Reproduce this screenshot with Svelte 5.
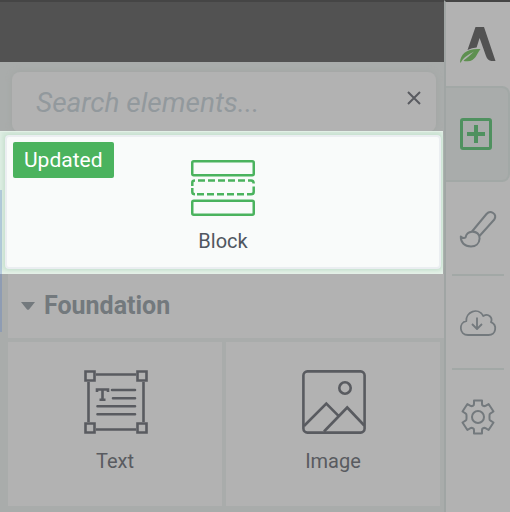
<script lang="ts">
	let query = '';
	let open = true;
	let activeTab = 'add';

	const tabs = [
		{ id: 'add', label: 'Add element' },
		{ id: 'style', label: 'Styles' },
		{ id: 'library', label: 'Cloud templates' },
		{ id: 'settings', label: 'Settings' }
	];

	const elements = [
		{ id: 'text', name: 'Text' },
		{ id: 'image', name: 'Image' }
	];
</script>

<div class="editor">
	<main class="panel">
		<div class="topbar"></div>

		<div class="search">
			<input type="text" placeholder="Search elements..." aria-label="Search elements" bind:value={query} />
			<button class="clear" type="button" aria-label="Clear search" on:click={() => (query = '')}>
				<svg width="14" height="14" viewBox="0 0 14 14">
					<path d="M1 1 13 13M13 1 1 13" fill="none" stroke="currentColor" stroke-width="2" />
				</svg>
			</button>
		</div>

		<div class="spotlight">
			<button class="block-card" type="button">
				<span class="badge">Updated</span>
				<svg width="64" height="58" viewBox="0 0 64 58" fill="none" stroke="currentColor" stroke-width="2.5">
					<rect x="1.25" y="2.25" width="61.5" height="14" rx="1.5" />
					<path d="M1.3 27V23.5Q1.3 21.5 4 21.5M7 21.5H14M17 21.5H24M27 21.5H34M37 21.5H44M47 21.5H54M57 21.5H60Q62.7 21.5 62.7 24.5M62.7 27.5V33Q62.7 35.3 60 35.3H56M53 35.3H46M43 35.3H36M33 35.3H26M23 35.3H16M13 35.3H6M4 35.3Q1.3 35.3 1.3 33V29" />
					<rect x="1.25" y="41.75" width="61.5" height="14" rx="1.5" />
				</svg>
				<span class="name">Block</span>
			</button>
		</div>

		<section class="group">
			<h2>
				<button class="group-title" type="button" aria-expanded={open} on:click={() => (open = !open)}>
					<svg width="14" height="8" viewBox="0 0 14 8">
						<path d="M0 0H14L8 7.4Q7 8 6 7.4Z" fill="currentColor" />
					</svg>
					Foundation
				</button>
			</h2>

			{#if open}
				<div class="tiles">
					{#each elements as element}
						<button class="tile" type="button">
							<svg width="64" height="64" viewBox="-1 0 64 64" fill="none" stroke="currentColor" stroke-width="2.6">
								{#if element.id === 'text'}
									<path d="M12 4.5H52M12 59.5H52M4.5 12V52M59.5 12V52" />
									<path d="M1.5 1.5H10.5V10.5H1.5ZM53.5 1.5H62.5V10.5H53.5ZM1.5 53.5H10.5V62.5H1.5ZM53.5 53.5H62.5V62.5H53.5Z" />
									<path d="M13 22V19.5H24V22M18.5 19V29.5M15.5 29.8H21.5" />
									<path d="M28 20H51M29 28.2H51M13.5 36.3H51M13.5 44.3H51" stroke-linecap="round" />
								{:else}
									<rect x="1.4" y="1.4" width="61.2" height="61.2" rx="4" />
									<circle cx="43" cy="18" r="5.7" />
									<path d="M2 56 24.3 33.5 37 46.3M22 61.5 45.2 37.5 62.3 55.5" />
								{/if}
							</svg>
							<span class="name">{element.name}</span>
						</button>
					{/each}
				</div>
			{/if}
		</section>
	</main>

	<aside class="sidebar">
		<a class="logo" href="#home" aria-label="Home">
			<svg width="36" height="37" viewBox="0 0 36 37">
				<path d="M15.5 1H24L35.5 35H31.5Q27.5 34.5 26 30L19.6 12 16.6 21.5Q12 21.8 7.5 24Z" fill="#525252" />
				<path d="M0 36.5C.3 28 7 22 20.5 23C16.5 28 15.7 35 7.5 35.3Q4.5 35.5 3.5 34.4C7 32 11 28.5 14 25.5C8.5 28.5 3.5 31.5.8 36.5Z" fill="#5e9050" />
			</svg>
		</a>

		<nav>
			{#each tabs as tab}
				<button
					class="tab"
					class:active={activeTab === tab.id}
					type="button"
					aria-label={tab.label}
					on:click={() => (activeTab = tab.id)}
				>
					{#if tab.id === 'add'}
						<svg width="32" height="32" viewBox="0 0 32 32" fill="none" stroke="currentColor">
							<rect x="1.5" y="1.5" width="29" height="29" rx="1.5" stroke-width="3" />
							<path d="M16 7V25M7 16H25" stroke-width="4" />
						</svg>
					{:else if tab.id === 'style'}
						<svg width="36" height="36" viewBox="0 0 36 36" fill="none" stroke="currentColor" stroke-width="2" stroke-linejoin="round">
							<path d="M12 20.5 26.5 3C30.5-1.5 37.5 3 34.3 8.5L19.5 25" />
							<path d="M12 20.8C16.5 20.5 19.8 23.5 19.6 27.5C19.3 33 15.5 35.5 11 35.5C4.5 35.5.7 31.5.8 25.5Q3.5 28 5.5 26.5C6.3 23 8.5 21 12 20.8ZM13.5 20.5Q18.5 21.5 19.5 25.5" />
						</svg>
					{:else if tab.id === 'library'}
						<svg width="36" height="26" viewBox="0 0 36 26" fill="none" stroke="currentColor" stroke-width="1.8" stroke-linejoin="round">
							<path d="M8 25C-1 25-1.5 12.5 6.3 11.2C5.5 2 18-3.5 23.3 6C28.5 3 33 7.5 31 12.2C37.5 15 36.3 25 28.5 25Z" />
							<path d="M17 7.5V18.5M12 14 17 19 22 14" />
						</svg>
					{:else}
						<svg width="36" height="36" viewBox="0 0 36 36" fill="none" stroke="currentColor" stroke-width="2" stroke-linejoin="round">
							<path d="M14 5V1.5H22V5Q22 6.3 23 6.7Q24.3 7.5 25.5 6.8L28.6 5 33.5 12.5 30.5 14.3Q29.3 15 29.5 16.5V19.5Q29.3 21 30.5 21.7L33.5 23.5 28.6 31 25.5 29.2Q24.3 28.5 23 29.3Q22 29.7 22 31V34.5H14V31Q14 29.7 13 29.3Q11.7 28.5 10.5 29.2L7.4 31 2.5 23.5 5.5 21.7Q6.7 21 6.5 19.5V16.5Q6.7 15 5.5 14.3L2.5 12.5 7.4 5 10.5 6.8Q11.7 7.5 13 6.7Q14 6.3 14 5Z" />
							<circle cx="18" cy="18" r="6" />
						</svg>
					{/if}
				</button>
			{/each}
		</nav>
	</aside>
</div>

<style>
	:global(body) {
		margin: 0;
		background: #b2b2b2;
	}

	.editor {
		display: flex;
		min-height: 100vh;
		overflow: hidden;
		font-family: Roboto, 'Liberation Sans', sans-serif;
		font-size: 20px;
		line-height: 24px;
		color: #595b60;
		background: #b2b2b2;
	}

	button {
		border: 0;
		padding: 0;
		margin: 0;
		background: none;
		font: inherit;
		color: inherit;
		cursor: pointer;
	}

	svg {
		display: block;
		overflow: visible;
	}

	.panel {
		position: relative;
		flex: 1;
		min-width: 0;
		background: #a9acab;
	}

	/* edge of the selected canvas item behind the panel */
	.panel::before {
		content: '';
		position: absolute;
		z-index: 1;
		top: 190px;
		left: 0;
		width: 2px;
		height: 142px;
		background: #5078c8;
		opacity: 0.3;
	}

	.topbar {
		box-sizing: border-box;
		height: 62px;
		border-top: 2px solid #454545;
		background: #525252;
	}

	.search {
		display: flex;
		align-items: center;
		height: 60px;
		margin: 10px 8px -1px 12px;
		padding-right: 14px;
		border-radius: 8px;
		background: #b2b2b2;
		box-shadow: 0 0 6px #a1a5a3;
	}

	.search input {
		flex: 1;
		min-width: 0;
		padding: 0 24px;
		border: 0;
		outline: 0;
		background: none;
		font: italic 28px Roboto, 'Liberation Sans', sans-serif;
		color: #595b60;
	}

	.search input::placeholder {
		color: #92999d;
		opacity: 1;
	}

	.clear {
		padding: 0 1px;
		margin-bottom: 8px;
	}

	.spotlight {
		position: relative;
		box-sizing: border-box;
		margin-right: 1px;
		padding: 3px 2px 5px 5px;
		border-top: 1px solid #e4f1e8;
		background: #d6e8dc;
		box-shadow: inset 0 -3px 4px #e6f2e9;
	}

	.block-card {
		position: relative;
		box-sizing: border-box;
		display: flex;
		flex-direction: column;
		align-items: center;
		gap: 12px;
		width: 100%;
		padding: 22px 0 14px;
		border: 2px solid #ebeef1;
		border-radius: 4px;
		background: #f9fbfa;
		box-shadow: 0 0 4px #bddcc7;
		color: #4bb35e;
	}

	.block-card .name {
		color: #50565f;
	}

	.badge {
		position: absolute;
		top: 5px;
		left: 6px;
		padding: 6px 11px;
		border-radius: 2px;
		background: #4bb35e;
		font-size: 21px;
		color: #fff;
	}

	.group {
		margin-left: 8px;
	}

	h2 {
		margin: 0;
		font: inherit;
	}

	.group-title {
		display: flex;
		align-items: center;
		gap: 9px;
		width: 100%;
		height: 64px;
		padding-left: 13px;
		background: #b2b2b2;
		font-size: 25px;
		font-weight: 700;
		color: #73797d;
	}

	.tiles {
		display: grid;
		grid-template-columns: 1fr 1fr;
		gap: 4px;
		margin: 4px 4px 4px 0;
	}

	.tile {
		display: flex;
		flex-direction: column;
		align-items: center;
		gap: 15px;
		padding: 28px 0 33px;
		background: #b2b2b2;
	}

	.sidebar {
		box-sizing: border-box;
		width: 66px;
		border-top: 2px solid #454545;
		border-left: 2px solid #a0a5a4;
		background: #b2b2b2;
	}

	.logo {
		display: flex;
		align-items: center;
		justify-content: center;
		height: 84px;
	}

	.tab {
		position: relative;
		box-sizing: border-box;
		display: flex;
		align-items: center;
		justify-content: center;
		width: 100%;
		height: 94px;
		color: #73797d;
	}

	.tab.active {
		height: 96px;
		padding: 0 2px 0 0;
		border: 2px solid #a2a8a6;
		border-left: 0;
		border-radius: 0 8px 8px 0;
		background: #a9acab;
		color: #4f915f;
	}

	.tab:not(:last-child):not(.active)::after {
		content: '';
		position: absolute;
		right: 6px;
		bottom: 0;
		left: 6px;
		height: 2px;
		background: #a2a8a6;
	}
</style>
